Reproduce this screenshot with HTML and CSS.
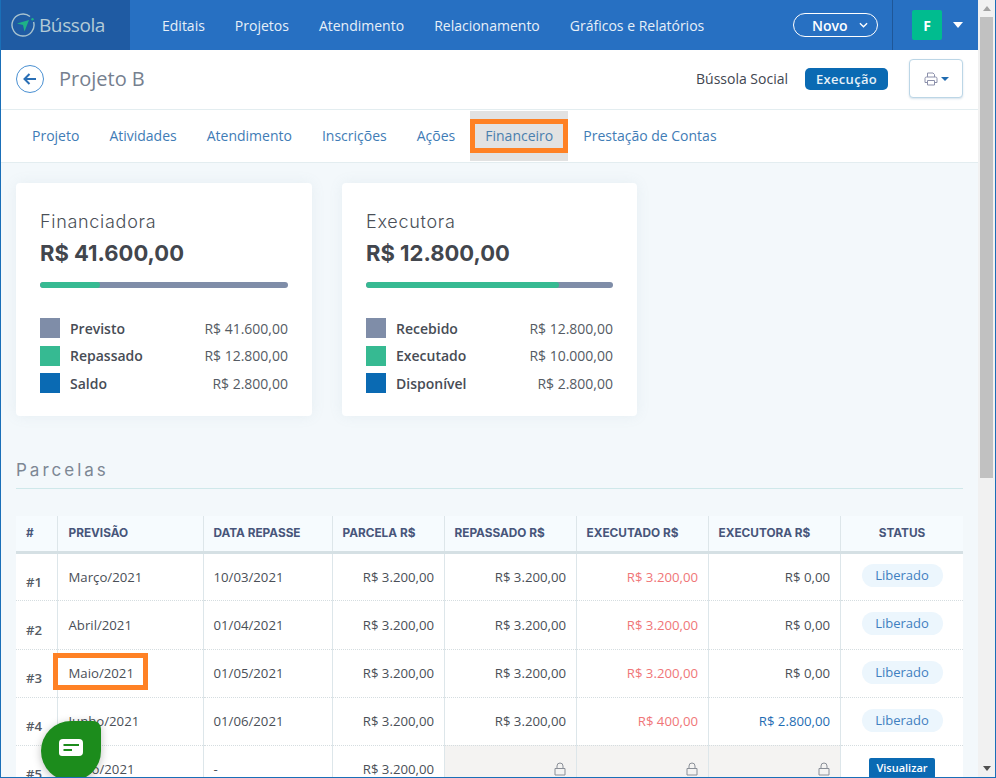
FILE: index.html
```html
<!DOCTYPE html>
<html lang="pt-BR">
<head>
<meta charset="utf-8">
<title>Projeto B</title>
<link rel="stylesheet" href="styles.css">
</head>
<body>
<div class="window">
  <div class="page">
    <header class="topbar">
      <div class="logo">
        <svg class="logo-icon" viewBox="0 0 24 24" width="24" height="24"><path d="M19 3.5 A11 11 0 1 0 22.6 9" fill="none" stroke="#a9c3cf" stroke-width="1.4"/><path d="M6 10.5 L18 7 L13.5 18.5 L12 12 Z" fill="#1eb386"/><circle cx="21.5" cy="6.3" r="1.2" fill="#1eb386"/></svg>
        <span class="logo-text">Bússola</span>
      </div>
      <nav class="mainnav">
        <a>Editais</a><a>Projetos</a><a>Atendimento</a><a>Relacionamento</a><a>Gráficos e Relatórios</a>
      </nav>
      <button class="novo">Novo
        <svg viewBox="0 0 10 6" width="9" height="6"><path d="M1 1 L5 5 L9 1" fill="none" stroke="#fff" stroke-width="1.5"/></svg>
      </button>
      <div class="user">
        <span class="avatar">F</span>
        <span class="caret-white"></span>
      </div>
    </header>

    <section class="subhead">
      <span class="back">
        <svg viewBox="0 0 14 12" width="14" height="12"><path d="M6.5 1 L1.5 6 L6.5 11 M1.5 6 H13" fill="none" stroke="#2a6fb5" stroke-width="2"/></svg>
      </span>
      <h1 class="title">Projeto B</h1>
      <span class="org">Bússola Social</span>
      <span class="pill-exec">Execução</span>
      <button class="print">
        <svg viewBox="0 0 14 14" width="14" height="14"><path d="M3.5 5 V1 H9 L10.5 2.5 V5 M3.5 10.5 H1 V6.5 Q1 5 2.5 5 H11.5 Q13 5 13 6.5 V10.5 H10.5 M3.5 8.5 H10.5 V13 H3.5 Z" fill="none" stroke="#8c90ab" stroke-width="1"/></svg>
        <span class="caret-blue"></span>
      </button>
    </section>

    <nav class="tabs">
      <a>Projeto</a><a>Atividades</a><a>Atendimento</a><a>Inscrições</a><a>Ações</a><a class="active">Financeiro</a><a>Prestação de Contas</a>
    </nav>

    <main class="content">
      <div class="cards">
        <article class="card">
          <h2 class="card-title">Financiadora</h2>
          <div class="card-value">R$ 41.600,00</div>
          <div class="bar"><span class="bar-fill" style="width:24%"></span></div>
          <ul class="legend">
            <li><i class="sw gray"></i><b>Previsto</b><span>R$ 41.600,00</span></li>
            <li><i class="sw green"></i><b>Repassado</b><span>R$ 12.800,00</span></li>
            <li><i class="sw blue"></i><b>Saldo</b><span>R$ 2.800,00</span></li>
          </ul>
        </article>
        <article class="card">
          <h2 class="card-title">Executora</h2>
          <div class="card-value">R$ 12.800,00</div>
          <div class="bar"><span class="bar-fill" style="width:78%"></span></div>
          <ul class="legend">
            <li><i class="sw gray"></i><b>Recebido</b><span>R$ 12.800,00</span></li>
            <li><i class="sw green"></i><b>Executado</b><span>R$ 10.000,00</span></li>
            <li><i class="sw blue"></i><b>Disponível</b><span>R$ 2.800,00</span></li>
          </ul>
        </article>
      </div>

      <h3 class="section">Parcelas</h3>

      <table class="grid">
        <colgroup>
          <col class="c1"><col class="c2"><col class="c3"><col class="c4"><col class="c5"><col class="c6"><col class="c7"><col class="c8">
        </colgroup>
        <thead>
          <tr><th>#</th><th>PREVISÃO</th><th>DATA REPASSE</th><th>PARCELA R$</th><th>REPASSADO R$</th><th>EXECUTADO R$</th><th>EXECUTORA R$</th><th class="center">STATUS</th></tr>
        </thead>
        <tbody>
          <tr class="r1"><td class="idx">#1</td><td>Março/2021</td><td>10/03/2021</td><td class="num">R$ 3.200,00</td><td class="num">R$ 3.200,00</td><td class="num red">R$ 3.200,00</td><td class="num">R$ 0,00</td><td class="center"><span class="status">Liberado</span></td></tr>
          <tr class="r2"><td class="idx">#2</td><td>Abril/2021</td><td>01/04/2021</td><td class="num">R$ 3.200,00</td><td class="num">R$ 3.200,00</td><td class="num red">R$ 3.200,00</td><td class="num">R$ 0,00</td><td class="center"><span class="status">Liberado</span></td></tr>
          <tr class="r3"><td class="idx">#3</td><td><span class="mark">Maio/2021</span></td><td>01/05/2021</td><td class="num">R$ 3.200,00</td><td class="num">R$ 3.200,00</td><td class="num red">R$ 3.200,00</td><td class="num">R$ 0,00</td><td class="center"><span class="status">Liberado</span></td></tr>
          <tr class="r4"><td class="idx">#4</td><td>Junho/2021</td><td>01/06/2021</td><td class="num">R$ 3.200,00</td><td class="num">R$ 3.200,00</td><td class="num red">R$ 400,00</td><td class="num bluetext">R$ 2.800,00</td><td class="center"><span class="status">Liberado</span></td></tr>
          <tr class="r5"><td class="idx">#5</td><td>Julho/2021</td><td>-</td><td class="num">R$ 3.200,00</td>
            <td class="num locked"><svg class="lock" viewBox="0 0 12 14" width="12" height="14"><path d="M3 6.5 V4 Q3 1 6 1 Q9 1 9 4 V6.5 M1 6.5 H11 V13 H1 Z" fill="none" stroke="#8a8f98" stroke-width="1"/></svg></td>
            <td class="num locked"><svg class="lock" viewBox="0 0 12 14" width="12" height="14"><path d="M3 6.5 V4 Q3 1 6 1 Q9 1 9 4 V6.5 M1 6.5 H11 V13 H1 Z" fill="none" stroke="#8a8f98" stroke-width="1"/></svg></td>
            <td class="num locked"><svg class="lock" viewBox="0 0 12 14" width="12" height="14"><path d="M3 6.5 V4 Q3 1 6 1 Q9 1 9 4 V6.5 M1 6.5 H11 V13 H1 Z" fill="none" stroke="#8a8f98" stroke-width="1"/></svg></td>
            <td class="center"><span class="view">Visualizar</span></td></tr>
        </tbody>
      </table>
    </main>
  </div>

  <div class="scrollbar">
    <span class="arrow up"></span>
    <span class="thumb"></span>
    <span class="arrow down"></span>
  </div>

  <button class="chat">
    <svg viewBox="0 0 24 18" width="24" height="18"><path d="M4 0 H20 Q24 0 24 4 V13 Q24 17 20 17 H3 Q0 17 0 14 V4 Q0 0 4 0 Z" fill="#fff"/><path d="M4.5 6 H20 M4.5 11 H13" stroke="#1c8c1c" stroke-width="2"/></svg>
  </button>
</div>
</body>
</html>
```

FILE: styles.css
```css
* { box-sizing: border-box; }
*::before, *::after { box-sizing: border-box; }
html, body { margin: 0; padding: 0; height: 100%; overflow: hidden; }
body { font-family: "Open Sans", sans-serif; color: #3f4650; }
ul { list-style: none; margin: 0; padding: 0; }
h1, h2, h3 { margin: 0; font-weight: 400; }
button { font-family: inherit; cursor: pointer; }

.window {
  position: relative;
  width: 996px;
  height: 778px;
  display: flex;
  overflow: hidden;
  border-left: 1px solid #1a6fb8;
  border-right: 1px solid #1a6fb8;
  border-bottom: 1px solid #1a6fb8;
  background: #f3f8fb;
}
.page { width: 977px; flex: none; height: 100%; overflow: hidden; }

/* top bar */
.topbar {
  height: 50px;
  display: flex;
  align-items: center;
  background: #2770c2;
  color: #fff;
}
.logo {
  width: 129px;
  height: 100%;
  flex: none;
  display: flex;
  align-items: center;
  gap: 4px;
  padding-left: 10px;
  background: #1f5ba3;
}
.logo-text { font-size: 19px; letter-spacing: -0.4px; color: #b4cbd6; }
.mainnav { display: flex; gap: 30px; margin-left: 32px; font-size: 14px; color: #e6eff8; white-space: nowrap; }
.novo {
  margin-left: auto;
  flex: none;
  width: 85px;
  height: 24px;
  display: flex;
  align-items: center;
  gap: 11px;
  background: transparent;
  border: 1px solid #fff;
  border-radius: 12px;
  color: #fff;
  font-size: 14px;
  font-weight: 600;
  padding: 0 0 0 18px;
}
.user {
  margin-left: 14px;
  flex: none;
  height: 100%;
  width: 86px;
  display: flex;
  align-items: center;
  gap: 11px;
  padding-left: 19px;
  border-left: 1px solid #1f5798;
}
.avatar {
  width: 30px;
  height: 30px;
  display: flex;
  align-items: center;
  justify-content: center;
  background: #00bc8f;
  border-radius: 2px;
  font-size: 14px;
  font-weight: 700;
}
.caret-white { width: 0; height: 0; border: 5.5px solid transparent; border-top: 6px solid #fff; border-bottom: 0; }

/* project header */
.subhead {
  height: 60px;
  display: flex;
  align-items: center;
  padding: 0 15px 2px;
  background: #fff;
  border-bottom: 1px solid #e3edf0;
}
.back {
  width: 28px;
  height: 28px;
  display: flex;
  align-items: center;
  justify-content: center;
  border: 1px solid #4a90d2;
  border-radius: 50%;
}
.title { margin-left: 15px; font-size: 20px; color: #76808f; flex: 1; }
.org { font-size: 14px; color: #3f4650; }
.pill-exec {
  margin-left: 17px;
  width: 83px;
  height: 22px;
  display: flex;
  align-items: center;
  justify-content: center;
  background: #0a6ab3;
  border-radius: 5px;
  color: #e6f1f8;
  font-size: 13px;
  font-weight: 600;
  letter-spacing: 0.3px;
}
.print {
  margin-left: 21px;
  width: 54px;
  height: 39px;
  display: flex;
  align-items: center;
  justify-content: center;
  gap: 3px;
  background: #fff;
  border: 1px solid #bcd6e6;
  border-radius: 4px;
  box-shadow: 0 1px 2px rgba(120, 160, 190, .3);
  padding: 0;
}
.caret-blue { width: 0; height: 0; border: 4.5px solid transparent; border-top: 4.5px solid #1f6bb0; border-bottom: 0; }

/* tabs */
.tabs {
  height: 53px;
  display: flex;
  align-items: center;
  gap: 30px;
  padding: 0 0 2px 31px;
  background: #fff;
  border-bottom: 1px solid #e3edf0;
  font-size: 14px;
  color: #3f7cb6;
}
.tabs a { position: relative; }
.tabs .active { color: #4a7fae; isolation: isolate; }
.tabs .active::before {
  content: "";
  position: absolute;
  z-index: -1;
  left: -15.5px;
  right: -15px;
  top: -14.5px;
  bottom: -16.5px;
  background: #e2e2e2;
}
.tabs .active::after {
  content: "";
  position: absolute;
  left: -15.5px;
  right: -15px;
  top: -6.5px;
  bottom: -8.5px;
  border: 5px solid #ff8124;
}

/* content */
.content { padding: 20px 15px 0; }
.cards { display: flex; gap: 30px; }
.card {
  width: 296px;
  height: 233px;
  padding: 27px 24px 0;
  background: #fff;
  border-radius: 4px;
  box-shadow: 0 0 14px rgba(120, 150, 170, .1);
}
.card + .card { width: 295px; }
.card-title { font-family: "Inter", sans-serif; font-size: 18px; font-weight: 300; line-height: 24px; letter-spacing: 0.7px; color: #4a4f57; }
.card-value { margin-top: 4px; font-family: "Inter", sans-serif; font-size: 22px; font-weight: 700; line-height: 30px; color: #42464d; }
.bar { margin-top: 14px; height: 6px; border-radius: 3px; background: #7f8da8; overflow: hidden; }
.bar-fill { display: block; height: 100%; background: #36ba92; border-radius: 3px; }
.legend { margin-top: 30px; font-size: 14px; display: flex; flex-direction: column; gap: 7.5px; }
.legend li { display: flex; align-items: center; height: 20px; }
.legend b { font-weight: 600; margin-left: 10px; flex: 1; color: #474c55; }
.legend span { color: #555b64; font-size: 14px; }
.sw { width: 20px; height: 20px; flex: none; }
.sw.gray { background: #7f8da8; }
.sw.green { background: #36ba92; }
.sw.blue { background: #0a6ab3; }

.section {
  margin-top: 42px;
  padding-bottom: 6px;
  border-bottom: 1px solid #cfe8ea;
  font-family: "Inter", sans-serif;
  font-size: 17px;
  line-height: 24px;
  letter-spacing: 3px;
  color: #7d8794;
}

/* table */
.grid {
  margin-top: 27px;
  width: 947px;
  border-collapse: collapse;
  table-layout: fixed;
  background: #fff;
  font-size: 13.2px;
}
.c1 { width: 41px; } .c2 { width: 146px; } .c3 { width: 129px; } .c4 { width: 112px; }
.c5 { width: 132px; } .c6 { width: 132px; } .c7 { width: 132px; } .c8 { width: 123px; }
.grid th {
  height: 36px;
  padding: 0 9.5px 0 10px;
  background: #f6fbfe;
  border-left: 1px solid #dde6ea;
  border-bottom: 3px solid #d5e0e4;
  font-family: "Inter", sans-serif;
  font-size: 11.8px;
  font-weight: 700;
  text-align: left;
  color: #47557a;
  white-space: nowrap;
}
.grid th:first-child, .grid td:first-child { border-left: 0; }
.grid td {
  padding: 0 9.5px 0 10px;
  border-left: 1px solid #dde6ea;
  border-bottom: 1px dotted #d5dde0;
  color: #4a4f57;
  white-space: nowrap;
}
.grid th:nth-child(2), .grid td:nth-child(2) { padding-left: 11px; }
.r1 td, .r3 td { height: 48px; }
.r2 td { height: 49px; }
.r4 td { height: 48px; }
.r5 td { height: 48px; }
.grid th.center, .grid td.center { text-align: center; }
.grid .num { text-align: right; }
.grid .red { color: #f07678; }
.grid .bluetext { color: #1f6db3; }
.grid .idx { padding-top: 10px; font-weight: 600; color: #555b64; }
.grid .locked { background: #f4f3f2; vertical-align: top; padding-top: 16px; }
.lock { display: inline-block; vertical-align: top; }
.mark { position: relative; display: inline-block; }
.mark::after {
  content: "";
  position: absolute;
  left: -16px;
  top: -11px;
  width: 95px;
  height: 37px;
  border: 5px solid #ff8124;
}
.status {
  display: inline-block;
  width: 81px;
  height: 23px;
  line-height: 22px;
  border-radius: 12px;
  background: #ecf6fd;
  color: #3f7fc0;
  font-size: 13px;
  position: relative;
  top: -1px;
}
.view {
  display: inline-block;
  padding: 0 7px;
  height: 22px;
  line-height: 20px;
  background: #0a6ab3;
  border-radius: 2px;
  color: #fff;
  font-size: 11px;
  font-weight: 600;
}

/* fake scrollbar */
.scrollbar {
  width: 17px;
  flex: none;
  height: 100%;
  display: flex;
  flex-direction: column;
  align-items: center;
  background: #f1f1f1;
}
.thumb { width: 13px; height: 461px; background: #c1c1c1; margin-top: 6px; }
.arrow { width: 0; height: 0; border: 4px solid transparent; }
.arrow.up { margin-top: 6px; border-bottom: 5px solid #a3a3a3; border-top: 0; }
.arrow.down { margin-top: auto; margin-bottom: 6px; border-top: 5px solid #505050; border-bottom: 0; }

/* chat button */
.chat {
  position: absolute;
  left: 40px;
  top: 721px;
  width: 60px;
  height: 60px;
  display: flex;
  align-items: center;
  justify-content: center;
  border: 0;
  padding: 0 0 6px;
  background: #1c8c1c;
  border-radius: 50% 8px 50% 50%;
  box-shadow: 0 2px 8px rgba(0, 0, 0, .25);
}
```
